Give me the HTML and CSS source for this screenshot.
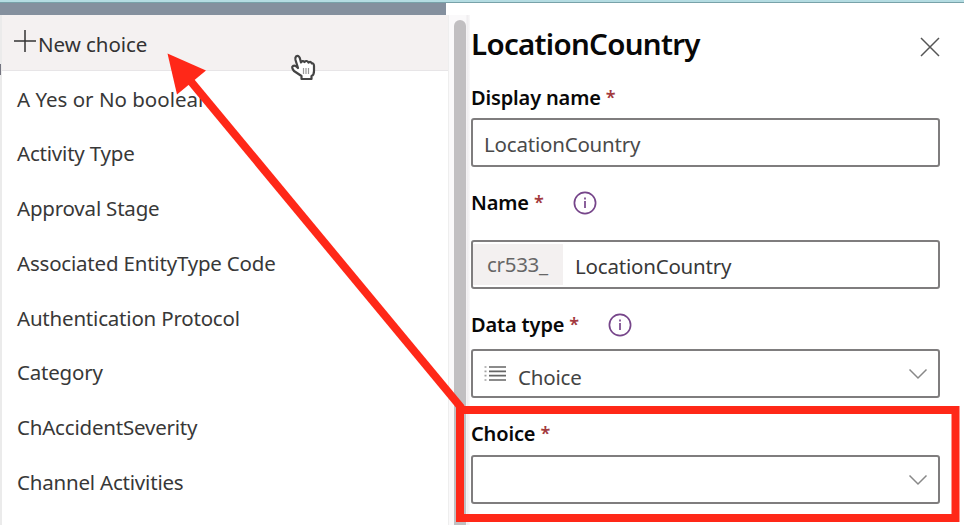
FILE: index.html
```html
<!DOCTYPE html>
<html lang="en">
<head>
<meta charset="utf-8">
<title>LocationCountry</title>
<link rel="stylesheet" href="styles.css">
</head>
<body>
<div class="screen">
  <div class="top-line"></div>
  <div class="content">
    <div class="left">
      <div class="header-strip"></div>
      <div class="dropdown">
        <ul class="options">
          <li class="option option-new"><svg class="plus" width="22" height="22" viewBox="0 0 22 22"><path d="M11 0v22M0 11h22"/></svg><span>New choice</span></li>
          <li class="option"><span class="t-yes">A Yes or No boolean</span></li>
          <li class="option"><span>Activity Type</span></li>
          <li class="option"><span>Approval Stage</span></li>
          <li class="option"><span>Associated EntityType Code</span></li>
          <li class="option"><span>Authentication Protocol</span></li>
          <li class="option"><span>Category</span></li>
          <li class="option"><span>ChAccidentSeverity</span></li>
          <li class="option"><span>Channel Activities</span></li>
        </ul>
        <div class="scroll-track"><div class="scroll-thumb"></div></div>
      </div>
    </div>
    <form class="panel">
      <div class="panel-head">
        <h1>LocationCountry</h1>
        <svg class="close" width="20" height="20" viewBox="0 0 20 20"><path d="M1 1l18 18M19 1L1 19"/></svg>
      </div>
      <div class="field">
        <div class="label"><span>Display name</span><b>*</b></div>
        <div class="box"><span class="value light">LocationCountry</span></div>
      </div>
      <div class="field field-name">
        <div class="label"><span>Name</span><b>*</b><svg class="info" width="24" height="24" viewBox="0 0 24 24"><circle cx="12" cy="12" r="10.6"/><path d="M12 10v7"/><path d="M12 6.4v2"/></svg></div>
        <div class="box"><span class="prefix">cr533_</span><span class="value name-value">LocationCountry</span></div>
      </div>
      <div class="field field-type">
        <div class="label"><span>Data type</span><b>*</b><svg class="info" width="24" height="24" viewBox="0 0 24 24"><circle cx="12" cy="12" r="10.6"/><path d="M12 10v7"/><path d="M12 6.4v2"/></svg></div>
        <div class="box"><svg class="list-icon" width="23" height="17" viewBox="0 0 23 17"><path d="M5 2h17M5 6.3h17M5 10.7h17M5 15h17"/><path d="M0.5 2h2M0.5 6.3h2M0.5 10.7h2M0.5 15h2" opacity=".6"/></svg><span class="value choice-value">Choice</span><svg class="chevron" width="20" height="12" viewBox="0 0 20 12"><path d="M1.500 1.500l8.500 8.500 8.500-8.500"/></svg></div>
      </div>
      <div class="field field-choice">
        <div class="label"><span>Choice</span><b>*</b></div>
        <div class="box"><svg class="chevron" width="20" height="12" viewBox="0 0 20 12"><path d="M1.500 1.500l8.500 8.500 8.500-8.500"/></svg></div>
      </div>
    </form>
  </div>
  <svg class="annotation" width="964" height="525" viewBox="0 0 964 525">
    <g class="hand" transform="translate(291 54)"><path d="M5 2.500Q7.500 .8 8.800 4L10 8.500Q11.500 6 13.500 8Q15.500 5.800 17.500 8.500Q20 7 20.700 9.500Q23 9 23 12V17Q23 21 20.500 22V25H10.500V22L3 17Q0 13 2 12Q4 10.500 7 14L4.500 6Q4 3.500 5 2.500Z"/><path class="fingers" d="M12.500 14v6M15 14v6M17.500 14v6"/></g>
    <path class="edge" d="M0 64h1v11H0z"/>
    <path class="arrow-line" d="M461.500 408L188 78"/>
    <path class="arrow-head" d="M167.500 53.500L206 70.500 177 94.500z"/>
    <rect class="highlight" x="460" y="410" width="495.500" height="108"/>
  </svg>
</div>
</body>
</html>
```
FILE: styles.css
```css
* { box-sizing: border-box; }
body { margin: 0; font-family: "Noto Sans", "Open Sans", sans-serif; font-size: 20.5px; letter-spacing: -0.2px; color: #383838; background: #fff; }
.screen { position: relative; width: 964px; height: 525px; overflow: hidden; display: flex; flex-direction: column; }
.top-line { height: 3px; flex: none; background: #b4dce2; border-bottom: 1px solid #78a2a9; }
.content { flex: 1; display: flex; }
.left { width: 470px; flex: none; display: flex; flex-direction: column; }
.header-strip { width: 446px; height: 12px; flex: none; background: #84909e; }
.dropdown { height: 510px; display: flex; border-left: 2px solid #ebebeb; }
.options { width: 446px; margin: 0; padding: 0; list-style: none; }
.option { height: 54.75px; padding: 0.5px 0 0 15px; display: flex; align-items: center; white-space: nowrap; line-height: 28px; }
.t-yes { letter-spacing: 0; }
.option-new { height: 56px; padding: 3px 0 0 13px; letter-spacing: -0.05px; background: #f4f1f1; border-bottom: 1px solid #e7e5e7; color: #333; }
.plus { flex: none; margin: -6px 2px 0 -1px; fill: none; stroke: #333; stroke-width: 1.5; }
.scroll-track { width: 22px; padding: 5px 0 0 5px; border-left: 1px solid #eee; background: linear-gradient(90deg, #faf9fa 0 17px, #eeecee 18px, #fdfdfd 22px); }
.scroll-thumb { width: 12px; height: 505px; border-radius: 6px 6px 0 0; background: #c1bfc1; }
.panel { width: 470px; padding-left: 1px; }
.panel-head { height: 81px; display: flex; justify-content: space-between; }
h1 { margin: 20px 0 0; color: #080808; font-size: 29.5px; line-height: 42px; letter-spacing: -0.7px; font-weight: 600; }
.close { margin-top: 34px; fill: none; stroke: #555; stroke-width: 1.5; }
.label { height: 34px; display: flex; align-items: center; padding-bottom: 7px; color: #080808; font-weight: 600; font-size: 20px; letter-spacing: -0.15px; white-space: nowrap; }
.label b { margin: -2px 0 0 5px; color: #a33a3e; font-size: 18px; font-weight: 600; line-height: 20px; }
.box { height: 49px; border: 2px solid #7f7d7e; border-radius: 3px; display: flex; align-items: center; }
.value { padding: 2px 0 0 11px; white-space: nowrap; }
.name-value { padding-left: 12px; }
.light { color: #4a4a4a; }
.field-name { padding-top: 21px; }
.field-name .label { height: 52px; padding-bottom: 23px; }
.prefix { align-self: stretch; width: 90px; margin: 2px 0 2px 0; padding: 6px 0 0 14px; background: #f3f0f0; color: #666; line-height: 28px; letter-spacing: -0.3px; }
.info { margin-left: 29px; fill: none; stroke: #76458a; stroke-width: 1.7; }
.field-type { padding-top: 20px; }
.field-type .label { height: 40px; padding-bottom: 9px; }
.list-icon { margin: 0 0 0 11px; fill: none; stroke: #666; stroke-width: 1.7; }
.choice-value { padding: 6px 0 0 11px; color: #444; }
.chevron { margin: 1px 10px 0 auto; fill: none; stroke: #888; stroke-width: 1.5; }
.field-choice { padding-top: 20px; }
.field-choice .label { height: 37px; padding-bottom: 6px; }
.annotation { position: absolute; inset: 0; pointer-events: none; }
.hand { fill: #fff; stroke: #444; stroke-width: 2.2; stroke-linejoin: round; }
.hand .fingers { stroke: #999; stroke-width: 1.2; }
.edge { fill: #747480; }
.arrow-line { fill: none; stroke: #ff2818; stroke-width: 8; }
.arrow-head { fill: #ff2818; }
.highlight { fill: none; stroke: #ff2818; stroke-width: 8; }
```
